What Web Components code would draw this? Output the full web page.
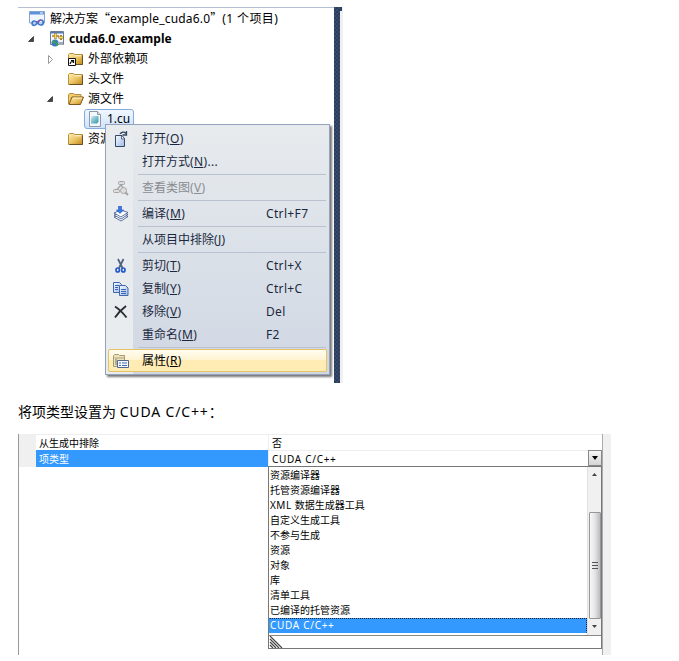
<!DOCTYPE html>
<html lang="zh-CN">
<head>
<meta charset="utf-8">
<title>CUDA project setup</title>
<style>
  body {
    margin: 0;
    width: 679px;
    height: 661px;
    overflow: hidden;
    background: #fff;
    color: #000;
    font-family: "Noto Sans", "Noto Sans CJK SC", sans-serif;
    font-size: 12px;
  }
  doc-page { --navy: #2f4163; }
  .q { font-family: "Noto Sans CJK SC", sans-serif; }
  .latin { letter-spacing: .17px; }
  .count { letter-spacing: .4px; }
  .wide { letter-spacing: .85px; }
  tree-item b { letter-spacing: .06px; }
</style>
</head>
<body>
<doc-page>
  <solution-panel>
    <tree-item icon="solution" level="0">解决方案<span class="q">“</span><span class="latin">example_cuda6.0</span><span class="q">”</span><span class="count">(1 个项目)</span></tree-item>
    <tree-item icon="project" level="1" arrow="open"><b>cuda6.0_example</b></tree-item>
    <tree-item icon="link" level="2" arrow="closed">外部依赖项</tree-item>
    <tree-item icon="folder" level="2">头文件</tree-item>
    <tree-item icon="opened" level="2" arrow="open">源文件</tree-item>
    <tree-item icon="file" level="3" selected>1.cu</tree-item>
    <tree-item icon="folder" level="2">资源文件</tree-item>
    <context-menu slot="menu">
      <menu-item icon="open" key="O">打开</menu-item>
      <menu-item key="N" tail="...">打开方式</menu-item>
      <menu-line></menu-line>
      <menu-item icon="classes" key="V" disabled>查看类图</menu-item>
      <menu-line></menu-line>
      <menu-item icon="compile" key="M" shortcut="Ctrl+F7">编译</menu-item>
      <menu-line></menu-line>
      <menu-item key="J">从项目中排除</menu-item>
      <menu-line></menu-line>
      <menu-item icon="cut" key="T" shortcut="Ctrl+X">剪切</menu-item>
      <menu-item icon="copy" key="Y" shortcut="Ctrl+C">复制</menu-item>
      <menu-item icon="remove" key="V" shortcut="Del">移除</menu-item>
      <menu-item key="M" shortcut="F2">重命名</menu-item>
      <menu-line></menu-line>
      <menu-item icon="props" key="R" active>属性</menu-item>
    </context-menu>
  </solution-panel>
  <doc-caption>将项类型设置为 <span class="wide">CUDA C/C++</span>：</doc-caption>
  <property-grid>
    <property-row name="从生成中排除">否</property-row>
    <property-row name="项类型" selected>CUDA C/C++</property-row>
    <drop-list slot="list">
      <list-option>资源编译器</list-option>
      <list-option>托管资源编译器</list-option>
      <list-option><span style="letter-spacing:.5px">XML </span>数据生成器工具</list-option>
      <list-option>自定义生成工具</list-option>
      <list-option>不参与生成</list-option>
      <list-option>资源</list-option>
      <list-option>对象</list-option>
      <list-option>库</list-option>
      <list-option>清单工具</list-option>
      <list-option>已编译的托管资源</list-option>
      <list-option selected>CUDA C/C++</list-option>
    </drop-list>
  </property-grid>
</doc-page>

<script>
const defs = /*html*/ `
  <defs>
    <linearGradient id="gold" x2="1" y2="1"><stop stop-color="#fff0b4"/><stop offset=".55" stop-color="#eac160"/><stop offset="1" stop-color="#bd8418"/></linearGradient>
    <linearGradient id="blue" x2="1" y2="1"><stop stop-color="#f8fcff"/><stop offset="1" stop-color="#9db9e4"/></linearGradient>
    <linearGradient id="teal" x2="1" y2="1"><stop stop-color="#c8e9ee"/><stop offset="1" stop-color="#2f94aa"/></linearGradient>
  </defs>`

const folder = /*html*/ `
  <path d="M.5 3.5l1-1h4l1.2 1h7.8v10H.5z" fill="url(#gold)" stroke="#b98f3c"/>
  <path d="M7 4.800h6" stroke="#fff9df"/>
  <path d="M1.500 13.500h13v-9" fill="none" stroke="#6b5223"/>`

const icons = {
  solution: `<path d="M.5.5h15v11.500H.5z" fill="#f1f6fd" stroke="#86a3cd"/><path d="M1 1h14v2.500H1z" fill="#5b92dc"/><path d="M11 2h3" stroke="#fff"/>
    <path d="M9 12.800C7.800 10.800 6.700 10 5.300 10a2.200 2.200 0 000 4.400c2.900 0 3.300-5.400 6.500-5.400a2.500 2.500 0 010 5c-1.200 0-2-.5-2.800-1.500" fill="none" stroke="#3f78d0" stroke-width="1.700"/>
    <path d="M8.500 11.500C9.500 10 10.300 9 11.800 9" fill="none" stroke="#8a4ca8" stroke-width="1.700"/>`,
  project: `<path d="M1.500.5h13v13h-13z" fill="#f2f5fa" stroke="#6a7d9d"/><path d="M2 1h12v1.500H2z" fill="#587cae"/>
    <path d="M6.500 2v6M3.500 5h6M12 4v5M9.500 6.500h5" stroke="#81611a" stroke-width="2"/><path d="M6.500 2.500v5M4 5h5M12 4.500v4M10 6.500h4" stroke="#ffd949"/>
    <circle cx="6" cy="12" r="3.500" fill="#397ac2"/><path d="M3 11l2-2 2 2-2 2zm4 1l2-1v3l-2 1z" fill="#3f9f54"/><path d="M10 11h4v3h-4z" fill="#a3abb5"/>`,
  folder,
  link: folder + `<path d="M.5 7.500h7v7h-7z" fill="#fff" stroke="#111"/><path d="M2.200 13c0-1.500 0-2.500 3-2.500M3 9.500h2.500V12" fill="none" stroke="#000" stroke-width="1.200"/>`,
  opened: `<path d="M.5 13V3.500l1-1h4l1.200 1H13V7" fill="#f2cb6d" stroke="#b98f3c"/><path d="M1 13.500l3-7.500h11.500l-3 7.500z" fill="url(#gold)" stroke="#80591b"/><path d="M5 7h9" stroke="#fff5cb"/>`,
  file: `<path d="M2.500.5h8l3 3v12h-11z" fill="#f4f7fa" stroke="#8a99a9"/><path d="M10.500.5v3h3" fill="#d5e2ed" stroke="#8a99a9"/><path d="M5.500 5h6v5.500l-1.500 2H4V6.500z" fill="url(#teal)"/>`,
  open: `<path d="M2.500 4.500h6.500l2.500 3v8h-9z" fill="url(#blue)" stroke="#344765"/><path d="M8.500 5v3H11" fill="#fff" stroke="#566b8d"/><path d="M7 3c1-2 4-2.500 6-.5M13.500 0v4h-4" fill="none" stroke="#34455f" stroke-width="1.300"/>`,
  classes: `<g fill="#dedede" stroke="#a3a3a3"><rect x="5.500" y="1.500" width="6" height="3" rx="1"/><path d="M8 5L4 9.500M8 5l3 4" fill="none" stroke-width="1.300"/><rect x=".5" y="9.500" width="6" height="3" rx="1"/><circle cx="10.500" cy="10.500" r="3"/><path d="M12.500 12.500l2.500 2.500" stroke-width="2"/></g>`,
  compile: `<g fill="#fff" stroke="#344e86" stroke-width=".8"><path d="M1 11l7-3 7 2.500-7 4.500z"/><path d="M1 9l7-3 7 2.500L8 13z"/><path d="M1 7l7-3 7 2.500L8 11z"/></g><path d="M5.500 0h3v4h2.200L7 7.500 3.300 4h2.200z" fill="#3979e5" stroke="#1d4caa" stroke-width=".5"/>`,
  cut: `<path d="M5 1l4.500 9M10.500 1L6 10" stroke="#4d607c" stroke-width="1.700"/><g fill="none" stroke="#245aca" stroke-width="1.700"><ellipse cx="4.700" cy="12" rx="1.700" ry="2"/><ellipse cx="10.300" cy="12" rx="1.700" ry="2"/></g>`,
  copy: `<g fill="url(#blue)" stroke="#4166aa"><path d="M.5 1.500h6l2 2v8h-8z"/><path d="M6.500 4.500h6l2.500 2.500v7.500H6.500z"/></g><path d="M2 4.500h4M2 6.500h3M2 8.500h3M8 8.500h5M8 10.500h5M8 12.500h5" stroke="#3563bd"/>`,
  remove: `<path d="M2 2.500C6 5 10 9 13.500 13.500M13 2C9 5 5 9 2 13.500" fill="none" stroke="#262b34" stroke-width="1.900"/>`,
  props: `<path d="M.5 2.500l1-1h4l1 1h5v11H.5z" fill="#eee3b8" stroke="#a49b78"/><path d="M1.500 5h9.500" stroke="#a8a182"/><path d="M2 7h2M2 9h2M2 11h2" stroke="#76746a"/><path d="M4.500 7.500h11v7h-11z" fill="#f5f8fe" stroke="#52658e"/><path d="M6 10h2m1 0h5M6 12.500h2m1 0h5" stroke="#426aaf"/>`
}

function drawIcon(name) {
  return icons[name] ? `<svg width="16" height="16" viewBox="0 0 16 16">${defs}${icons[name]}</svg>` : ``
}

// Base class: every element renders once into an open shadow root
class BaseElement extends HTMLElement {
  constructor() {
    super()
    this.shadow = this.attachShadow({ mode: "open" })
  }

  connectedCallback() {
    this.shadow.innerHTML = `<style>
      * { box-sizing: border-box; }
      :host { display: block; box-sizing: border-box; }
      svg { display: block; flex: none; }
    </style>` + this.render()
  }
}

class DocPage extends BaseElement {
  render() {
    return /*html*/ `<style>:host { padding: 7px 0 0 18px; }</style><slot></slot>`
  }
}

class SolutionPanel extends BaseElement {
  render() {
    return /*html*/ `<style>
      :host { position: relative; display: flex; width: 325px; height: 376px; }
      .tree { width: 316px; border-top: 1px solid #b4bfd1; padding-top: 1px; }
      .splitter {
        width: 6px;
        background: repeating-conic-gradient(#2d3d5c 0 25%, #364b6e 0 50%) 0 0 / 4px 4px;
      }
      .edge { width: 3px; background: #f0f0f0; }
      .edge i { display: block; width: 2px; height: 4px; background: var(--navy); }
      .menu { position: absolute; left: 87px; top: 117px; }
    </style>
    <div class="tree"><slot></slot></div>
    <div class="splitter"></div>
    <div class="edge"><i></i></div>
    <div class="menu"><slot name="menu"></slot></div>`
  }
}

class TreeItem extends BaseElement {
  render() {
    const indent = [0, 9, 28, 47][this.getAttribute("level")]
    const arrow = this.getAttribute("arrow")
    const arrows = {
      open: `<path d="M6.500 1.500v5H1.500z" fill="#444" stroke="#111" stroke-width=".6"/>`,
      closed: `<path d="M2.500.5l4 4-4 4z" fill="#fff" stroke="#999"/>`
    }
    return /*html*/ `<style>
      :host { height: 20px; }
      .row { display: flex; align-items: center; height: 20px; padding-left: ${indent}px; white-space: nowrap; line-height: 20px; }
      .arrow { width: ${indent ? 20 : 9}px; flex: none; }
      .body { display: flex; align-items: center; gap: ${indent ? 4 : 5}px; height: 20px; padding: 0 3px 0 2px; border: 1px solid transparent; margin-left: -1px; }
      :host([selected]) .body { border-color: #84acdd; border-radius: 3px; background: linear-gradient(#f1f7fe, #cfe3fb); }
      .text { margin-top: -1px; }
    </style>
    <div class="row">
      <span class="arrow">${arrow ? `<svg width="8" height="9">${arrows[arrow]}</svg>` : ``}</span>
      <span class="body">${drawIcon(this.getAttribute("icon"))}<span class="text"><slot></slot></span></span>
    </div>`
  }
}

class ContextMenu extends BaseElement {
  render() {
    return /*html*/ `<style>
      :host {
        width: 225px;
        padding: 2px;
        border: 1px solid #94a3bb;
        background: linear-gradient(90deg, #e9ecee 27px, transparent 27px), linear-gradient(#e7ebee, #d0d7e3);
        box-shadow: 2px 2px 2px #777;
        color: #1b293e;
      }
    </style><slot></slot>`
  }
}

class MenuItem extends BaseElement {
  render() {
    return /*html*/ `<style>
      :host { display: grid; grid-template-columns: 29px 124px 1fr; align-items: center; height: 23px; padding-left: 5px; line-height: 20px; white-space: nowrap; border: 1px solid transparent; border-left: 0; margin-right: -1px; }
      :host([disabled]) { color: #8b8d91; }
      :host([active]) { color: #000; border: 1px solid #e5c365; border-radius: 2px; background: linear-gradient(#fffcf2, #fff3cf 49%, #ffecb5 50%); margin-right: 0; padding-left: 4px; }
      .key, .shortcut { letter-spacing: .35px; }
      u { text-underline-offset: 1px; }
    </style>
    <span>${drawIcon(this.getAttribute("icon"))}</span>
    <span><slot></slot><span class="key">(<u>${this.getAttribute("key")}</u>)${this.getAttribute("tail") || ``}</span></span>
    <span class="shortcut">${this.getAttribute("shortcut") || ``}</span>`
  }
}

class MenuLine extends BaseElement {
  render() {
    return /*html*/ `<style>:host { height: 1px; margin: 1px 1px 1px 30px; background: #b9c0cf; }</style>`
  }
}

class DocCaption extends BaseElement {
  render() {
    return /*html*/ `<style>:host { height: 51px; padding-top: 18px; font-size: 14px; line-height: 22px; }</style><slot></slot>`
  }
}

class PropertyGrid extends BaseElement {
  render() {
    return /*html*/ `<style>
      :host { position: relative; width: 593px; height: 221px; border-left: 1px solid #999; border-right: 8px solid #f0f0f0; font-size: 10px; }
      .inner { height: 221px; border-right: 1px solid #aaa; }
      .list { position: absolute; left: 249px; top: 32px; }
    </style>
    <div class="inner"><slot></slot></div>
    <div class="list"><slot name="list"></slot></div>`
  }
}

class PropertyRow extends BaseElement {
  render() {
    const selected = this.hasAttribute("selected")
    return /*html*/ `<style>
      :host { display: grid; grid-template-columns: 17px 232px 1fr auto; height: 16px; line-height: 16px; white-space: nowrap; }
      .gutter { background: #f0f0f0; }
      .name, .value { border-top: 1px solid #eee; padding-left: 3px; }
      .value { border-left: 1px solid #eee; }
      :host([selected]) .name { background: #3399ff; border-color: #3399ff; color: #fff; }
      :host([selected]) .value { letter-spacing: .7px; }
      .button { display: grid; place-items: center; width: 14px; height: 16px; border: 1px solid #888; background: linear-gradient(#f6f6f6, #d4d4d4); }
    </style>
    <span class="gutter"></span>
    <span class="name">${this.getAttribute("name")}</span>
    <span class="value"><slot></slot></span>
    ${selected ? `<span class="button"><svg width="6" height="4"><path d="M0 0h6L3 4z"/></svg></span>` : ``}`
  }
}

class DropList extends BaseElement {
  render() {
    return /*html*/ `<style>
      :host { width: 334px; height: 183px; border: 1px solid #777; background: #fff; }
      .main { display: flex; height: 169px; border-bottom: 1px solid #888; }
      .options { flex: 1; padding-top: 1px; }
      .bar { display: flex; flex-direction: column; align-items: center; width: 14px; background: #f0f0f0; border-left: 1px solid #e2e2e2; }
      .up { height: 45px; padding-top: 6px; }
      .thumb { display: grid; place-items: center; width: 12px; height: 107px; border: 1px solid #979797; border-radius: 1px; background: linear-gradient(90deg, #f7f7f7, #e4e4e6 50%, #bbbcc0); }
      .down { padding-top: 6px; }
    </style>
    <div class="main">
      <div class="options"><slot></slot></div>
      <div class="bar">
        <span class="up"><svg width="5" height="3"><path d="M0 3h5L2.500 0z" fill="#444"/></svg></span>
        <span class="thumb"><svg width="6" height="7"><path d="M0 .5h6M0 3.500h6M0 6.500h6" stroke="#555"/></svg></span>
        <span class="down"><svg width="5" height="3"><path d="M0 0h5L2.500 3z" fill="#444"/></svg></span>
      </div>
    </div>
    <svg width="14" height="12"><path d="M1 0l12 12M1 3l9 9M1 6l6 6M1 9l3 3" stroke="#444" stroke-width="1.200"/></svg>`
  }
}

class ListOption extends BaseElement {
  render() {
    return /*html*/ `<style>
      :host { height: 15px; padding-left: 1px; line-height: 14px; white-space: nowrap; }
      :host([selected]) { padding-left: 0; border: 1px dotted #123; border-left-color: #3399ff; border-bottom-color: #3399ff; background: #3399ff; color: #fff; line-height: 13px; letter-spacing: .7px; }
    </style><slot></slot>`
  }
}

customElements.define("doc-page", DocPage)
customElements.define("solution-panel", SolutionPanel)
customElements.define("tree-item", TreeItem)
customElements.define("context-menu", ContextMenu)
customElements.define("menu-item", MenuItem)
customElements.define("menu-line", MenuLine)
customElements.define("doc-caption", DocCaption)
customElements.define("property-grid", PropertyGrid)
customElements.define("property-row", PropertyRow)
customElements.define("drop-list", DropList)
customElements.define("list-option", ListOption)
</script>
</body>
</html>
